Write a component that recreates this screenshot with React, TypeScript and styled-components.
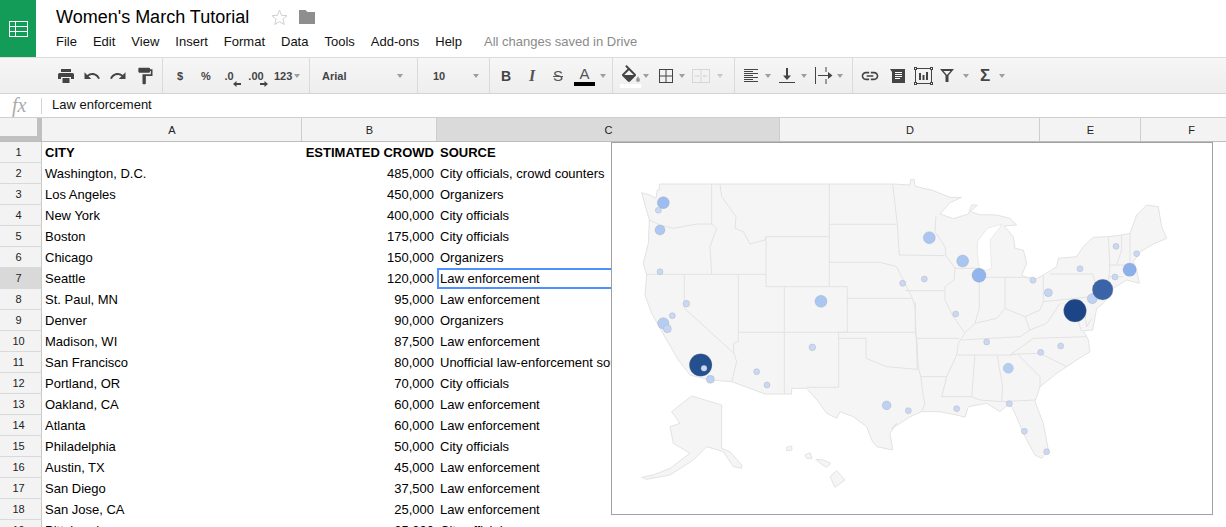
import React from 'react';
import styled, { createGlobalStyle } from 'styled-components';

const Global = createGlobalStyle`
  html, body { margin: 0; padding: 0; background: #fff; }
  body { font-family: "Liberation Sans", Arial, sans-serif; color: #000; }
`;

const Page = styled.div`
  position: relative;
  width: 1226px;
  height: 527px;
  overflow: hidden;
  background: #fff;
`;

/* ---------- header ---------- */
const Header = styled.header`
  display: flex;
  height: 57px;
  border-bottom: 1px solid #dcdcdc;
  box-sizing: content-box;
`;
const Logo = styled.div`
  width: 36px;
  height: 57px;
  background: #129c57;
  display: flex;
  align-items: center;
  justify-content: center;
`;
const TitleBlock = styled.div`
  margin-left: 20px;
  display: flex;
  flex-direction: column;
`;
const TitleRow = styled.div`
  height: 34px;
  display: flex;
  align-items: center;
  gap: 11px;
`;
const Title = styled.span`
  font-size: 18px;
  color: #000;
  margin-right: 11px;
`;
const Menu = styled.nav`
  display: flex;
  gap: 16px;
  height: 15px;
  line-height: 15px;
  font-size: 13px;
  color: #111;
`;
const Status = styled.span`
  margin-left: 6px;
  color: #8a8a8a;
`;

/* ---------- toolbar ---------- */
const Toolbar = styled.div`
  display: flex;
  height: 35px;
  background: linear-gradient(#f6f6f6, #eeeeee);
  border-bottom: 1px solid #d4d4d4;
`;
const ToolGroup = styled.div<{ $w?: number }>`
  display: flex;
  align-items: center;
  flex: ${p => (p.$w ? `0 0 ${p.$w}px` : '1')};
  box-sizing: border-box;
  height: 100%;
  ${p => (p.$w ? 'border-right: 1px solid #dadada;' : '')}
`;
const Tool = styled.div<{ $w: number; $ml?: number }>`
  flex: 0 0 ${p => p.$w}px;
  margin-left: ${p => p.$ml ?? 0}px;
  height: 100%;
  display: flex;
  align-items: center;
  justify-content: center;
  color: #444;
  position: relative;
`;
const BoldGlyph = styled.span<{ $size?: number }>`
  font-size: ${p => p.$size ?? 11}px;
  font-weight: bold;
  color: #444;
`;
const SerifI = styled.span`
  font-family: "Liberation Serif", serif;
  font-style: italic;
  font-weight: bold;
  font-size: 16px;
  color: #555;
`;
const Strike = styled.span`
  font-size: 15px;
  color: #555;
  text-decoration: line-through;
`;
const ColorA = styled.div`
  display: flex;
  flex-direction: column;
  align-items: center;
  font-size: 15px;
  line-height: 14px;
  color: #555;
  margin-top: 1px;
`;
const ColorBar = styled.span<{ $c: string }>`
  display: block;
  width: 21px;
  height: 4px;
  margin-top: 1px;
  background: ${p => p.$c};
`;
const FillStack = styled.div`
  display: flex;
  flex-direction: column;
  align-items: center;
  margin-top: 1px;
`;
const Caret = styled.div<{ $w: number; $ml?: number; $light?: boolean }>`
  flex: 0 0 ${p => p.$w}px;
  margin-left: ${p => p.$ml ?? 0}px;
  display: flex;
  justify-content: center;
  &::after {
    content: "";
    flex: none;
    width: 0;
    height: 0;
    margin-top: 1px;
    border-left: 3.5px solid transparent;
    border-right: 3.5px solid transparent;
    border-top: 4px solid ${p => (p.$light ? '#c8c8c8' : '#9e9e9e')};
  }
`;
const FontName = styled.div<{ $w: number; $ml: number }>`
  flex: 0 0 ${p => p.$w}px;
  margin-left: ${p => p.$ml}px;
  font-size: 11px;
  font-weight: bold;
  color: #444;
`;
const DecimalTool = styled.div`
  position: relative;
  font-size: 11px;
  font-weight: bold;
  color: #444;
`;
const DecimalArrow = styled.svg<{ $right: number }>`
  position: absolute;
  right: ${p => p.$right}px;
  bottom: -5px;
`;

/* ---------- formula bar ---------- */
const FormulaBar = styled.div`
  display: flex;
  align-items: center;
  height: 23px;
  border-bottom: 1px solid #cfcfcf;
  background: #fff;
`;
const Fx = styled.span`
  flex: 0 0 41px;
  box-sizing: border-box;
  padding-left: 12px;
  font-family: "Liberation Serif", serif;
  font-style: italic;
  font-size: 20px;
  color: #aaaaaa;
  line-height: 23px;
`;
const FormulaDivider = styled.span`
  width: 1px;
  height: 16px;
  background: #d4d4d4;
  margin-right: 10px;
`;
const FormulaText = styled.span`
  font-size: 13px;
  line-height: 15px;
  margin-top: -2px;
  color: #111;
`;

/* ---------- sheet ---------- */
const COLS = '42px 260px 135px 343px 260px 101px 101px';

const ColHead = styled.div`
  display: grid;
  grid-template-columns: ${COLS};
  height: 24px;
  border-bottom: 1px solid #bdbdbd;
  background: #f3f3f3;
  box-sizing: border-box;
`;
const Corner = styled.div`
  box-sizing: border-box;
  height: 23px;
  border-right: 5px solid #c0c0c0;
  border-bottom: 5px solid #c0c0c0;
  background: #f3f3f3;
`;
const ColLabel = styled.div<{ $sel?: boolean }>`
  display: flex;
  align-items: center;
  justify-content: center;
  padding-left: 1px;
  font-size: 11px;
  color: #222;
  box-sizing: border-box;
  border-right: 1px solid #cdcdcd;
  background: ${p => (p.$sel ? '#dadada' : '#f3f3f3')};
`;
const Row = styled.div`
  display: grid;
  grid-template-columns: ${COLS};
  height: 21px;
`;
const RowNum = styled.div<{ $sel?: boolean }>`
  box-sizing: border-box;
  display: flex;
  align-items: center;
  justify-content: center;
  padding-right: 4px;
  font-size: 11px;
  color: #222;
  background: ${p => (p.$sel ? '#d9d9d9' : '#f3f3f3')};
  border-right: 1px solid #c8c8c8;
  border-bottom: 1px solid #d9d9d9;
`;
const Cell = styled.div<{ $right?: boolean; $bold?: boolean; $sel?: boolean }>`
  box-sizing: border-box;
  font-size: 13px;
  line-height: 22px;
  white-space: nowrap;
  overflow: hidden;
  color: #000;
  text-align: ${p => (p.$right ? 'right' : 'left')};
  font-weight: ${p => (p.$bold ? 'bold' : 'normal')};
  padding: 0 3px;
  ${p => (p.$sel ? 'box-shadow: inset 0 0 0 2px #4d90fe;' : '')}
`;

/* ---------- chart ---------- */
const Chart = styled.div`
  position: absolute;
  left: 611px;
  top: 142px;
  width: 602px;
  height: 373px;
  box-sizing: border-box;
  border: 1px solid #a0a0a0;
  background: #fff;
`;
const MapSvg = styled.svg`
  display: block;
`;
const Land = styled.path`
  fill: #f5f5f5;
  stroke: #e2e2e2;
  stroke-width: 3;
  stroke-linejoin: round;
`;
const Border = styled.path`
  fill: none;
  stroke: #e2e2e2;
  stroke-width: 3;
  stroke-linejoin: round;
`;
const Lake = styled.path`
  fill: #fff;
  stroke: #e2e2e2;
  stroke-width: 2;
`;
const Bubble = styled.circle`
  stroke: rgba(140, 140, 140, 0.35);
  stroke-width: 2;
`;

type P = [number, number];
const d = (pts: P[], dx = 0, close = false) =>
  'M' + pts.map(([x, y]) => `${x + dx} ${y}`).join('L') + (close ? 'Z' : '');

const westA: P[] = [
  [95, 158], [120, 165], [138, 175], [142, 150], [148, 150], [148, 132], [848, 132],
];
const east: P[] = [
  [-22, 132], [30, 135], [32, 118], [42, 118], [45, 138], [70, 145], [95, 150], [120, 160], [150, 172], [185, 172],
  [150, 188], [120, 222], [160, 236], [205, 222], [215, 195], [232, 195], [212, 215], [238, 224], [290, 225], [330, 235], [350, 255],
  [312, 258], [340, 290], [345, 325], [370, 330], [380, 370], [365, 405], [398, 422], [432, 404], [470, 380], [475, 355],
  [530, 350], [550, 320], [580, 292], [625, 290], [665, 285], [690, 280], [710, 225], [740, 195], [775, 200], [785, 260],
  [800, 295], [760, 312], [722, 335], [700, 365], [710, 390], [718, 430], [680, 420], [640, 445], [610, 490], [590, 505],
  [578, 570], [550, 572], [565, 600], [570, 635], [530, 660], [500, 680], [470, 700], [420, 740], [405, 785], [430, 850],
  [445, 930], [425, 955], [405, 945], [375, 890], [345, 820], [330, 790], [300, 815], [260, 790], [205, 800], [195, 832],
  [170, 825], [120, 815], [65, 815], [30, 830], [0, 850], [-25, 865],
];
const westB: P[] = [
  [860, 850], [840, 880], [848, 930], [800, 920], [785, 900], [770, 860], [730, 830], [690, 815], [680, 835], [650, 820],
  [625, 785], [590, 745], [545, 745], [545, 762], [465, 762], [365, 725], [300, 720], [240, 705], [205, 660], [170, 600],
  [125, 520], [105, 465], [110, 405], [100, 370], [115, 310], [118, 240],
];
const outline = d([...westA, ...east.map(([x, y]) => [x + 870, y] as P), ...westB], 0, true);

const westBorders: P[][] = [
  [[118, 240], [150, 255], [190, 265], [260, 252], [305, 252]],
  [[305, 132], [305, 252]],
  [[330, 132], [335, 170], [378, 230], [375, 265], [400, 275], [420, 312], [465, 300], [468, 290]],
  [[305, 252], [320, 265], [300, 320], [305, 403]],
  [[110, 403], [468, 403]],
  [[223, 403], [223, 505], [372, 640]],
  [[385, 403], [385, 605], [370, 610], [372, 640], [380, 665], [365, 725]],
  [[468, 290], [658, 290], [658, 440], [468, 440], [468, 290]],
  [[523, 440], [523, 762]],
  [[385, 577], [712, 577]],
  [[658, 440], [712, 440], [712, 577]],
  [[686, 577], [686, 742], [590, 742]],
  [[658, 132], [658, 290]],
  [[658, 253], [860, 253]],
  [[658, 367], [810, 367], [860, 380], [880, 420], [905, 470], [915, 500], [918, 577], [922, 690]],
  [[712, 475], [905, 475]],
  [[848, 132], [862, 253], [868, 345], [1005, 347]],
  [[686, 595], [768, 595], [768, 655], [830, 680], [922, 688]],
  [[686, 577], [918, 577]],
];
const eastBorders: P[][] = [
  [[108, 228], [105, 275], [135, 320], [138, 347], [165, 385], [162, 420], [135, 440], [135, 480], [160, 530], [195, 580], [175, 610], [170, 645]],
  [[165, 385], [238, 385]],
  [[15, 452], [135, 452]],
  [[48, 595], [178, 595]],
  [[46, 485], [46, 577], [50, 595], [55, 680], [62, 710], [70, 770], [75, 790], [65, 815]],
  [[62, 710], [140, 710], [170, 645]],
  [[140, 710], [125, 770], [215, 770]],
  [[225, 645], [215, 770], [240, 780], [305, 785], [405, 780]],
  [[292, 648], [308, 740], [305, 785]],
  [[170, 645], [330, 645], [400, 595], [560, 590]],
  [[195, 578], [225, 550], [290, 535], [315, 505], [375, 530], [390, 570], [360, 590], [185, 600]],
  [[238, 412], [238, 505], [225, 550]],
  [[315, 412], [315, 505]],
  [[238, 412], [398, 412]],
  [[430, 405], [430, 485], [420, 510], [375, 530]],
  [[390, 570], [440, 550], [480, 490]],
  [[430, 485], [575, 470], [590, 440], [578, 402], [450, 402]],
  [[490, 490], [530, 530], [545, 575]],
  [[555, 520], [560, 560], [575, 535]],
  [[330, 645], [355, 642], [420, 640], [500, 680]],
  [[355, 645], [420, 710], [420, 740]],
  [[625, 290], [630, 375], [625, 430]],
  [[625, 375], [700, 375]],
  [[625, 410], [670, 410]],
  [[650, 375], [665, 330], [665, 285]],
  [[690, 280], [690, 365]],
];
const lake: P[] = [
  [232, 305], [262, 265], [305, 252], [300, 262], [270, 300], [272, 335], [275, 385], [258, 392], [238, 385], [232, 340],
];
const alaska: P[] = [
  [185, 815], [245, 768], [335, 795], [335, 925], [360, 935], [395, 975], [395, 985], [370, 980], [340, 935], [290, 920],
  [250, 960], [180, 1005], [110, 1018], [95, 1012], [130, 1005], [180, 985], [240, 940], [190, 910], [180, 860], [210, 850],
];
const hawaii: P[][] = [
  [[660, 1010], [680, 992], [705, 1020], [675, 1042]],
  [[585, 945], [600, 938], [606, 955], [590, 955]],
  [[618, 958], [640, 960], [662, 970], [650, 982], [630, 970]],
  [[530, 922], [545, 918], [546, 930], [530, 932]],
];

const S = '#c9d8f5';
const westBubbles: [number, number, number, string][] = [
  [160, 188, 18, '#9dbdf0'], [145, 211, 9, S], [150, 270, 15, '#aec8f2'], [150, 395, 9, S], [229, 491, 10, S],
  [187, 527, 9, S], [160, 550, 17, '#b6cdf3'], [172, 566, 12, '#c4d6f4'], [272, 675, 34, '#24508f'], [282, 685, 9, S],
  [301, 718, 12, '#bcd1f4'], [440, 695, 9, S], [471, 735, 9, S], [607, 622, 10, S], [633, 484, 18, '#aac6f3'],
  [830, 796, 13, '#bcd1f4'], [895, 812, 9, S], [878, 430, 9, S],
];
const eastBubbles: [number, number, number, string][] = [
  [88, 293, 18, '#abc6f2'], [188, 363, 18, '#a9c5f2'], [237, 406, 21, '#93b5ee'], [73, 417, 9, S], [167, 522, 9, S],
  [399, 421, 9, S], [445, 458, 12, '#c4d6f4'], [260, 606, 9, S], [422, 637, 9, S], [482, 618, 9, S],
  [325, 685, 15, '#b6cdf3'], [170, 806, 9, S], [328, 791, 9, S], [373, 874, 9, S], [440, 935, 9, S], [540, 386, 9, S],
  [648, 319, 9, S], [710, 341, 9, S], [645, 411, 9, S], [689, 389, 20, '#8bb0ec'], [577, 476, 15, '#bdd2f4'],
  [608, 449, 31, '#3b64a8'], [525, 512, 34, '#1c4587'],
];

const UsMap = () => (
  <MapSvg width={600} height={371} viewBox="612 143 600 371">
    <g transform="translate(610 140) scale(0.33333)">
      <Land d={outline} />
      <Land d={d(alaska, 0, true)} />
      {hawaii.map((h, i) => <Land key={i} d={d(h, 0, true)} />)}
      {westBorders.map((b, i) => <Border key={i} d={d(b)} />)}
      {eastBorders.map((b, i) => <Border key={i} d={d(b, 870)} />)}
      <Lake d={d(lake, 870, true)} />
      {westBubbles.map(([x, y, r, c], i) => <Bubble key={i} cx={x} cy={y} r={r} fill={c} />)}
      {eastBubbles.map(([x, y, r, c], i) => <Bubble key={i} cx={x + 870} cy={y} r={r} fill={c} />)}
    </g>
  </MapSvg>
);

/* ---------- icons ---------- */
const Mat = ({ size, path, fill = '#444' }: { size: number; path: string; fill?: string }) => (
  <svg width={size} height={size} viewBox="0 0 24 24"><path d={path} fill={fill} /></svg>
);
const SheetIcon = () => (
  <svg width={19} height={16} viewBox="0 0 19 16" fill="none" stroke="#fff" strokeWidth={1}>
    <rect x={0.5} y={0.5} width={18} height={15} />
    <path d="M0.5 5.5H18.5M0.5 10.5H18.5M6.5 0.5V15.5" />
  </svg>
);
const Star = () => (
  <svg width={17} height={17} viewBox="0 0 17 17" fill="#fff" stroke="#cfcfcf" strokeWidth={1}>
    <path d="M8.5 1.2l2.1 5.1 5.4.4-4.1 3.5 1.3 5.3-4.7-2.9-4.7 2.9 1.3-5.3L1 6.7l5.4-.4z" />
  </svg>
);
const Folder = () => (
  <svg width={16} height={14} viewBox="0 0 16 14"><path d="M0 0h6.5l2 2H16v12H0z" fill="#8e8e8e" /></svg>
);
const PrintIcon = () => (
  <svg width={16} height={14} viewBox="0 0 16 14" fill="#444">
    <path d="M3 0h10v3H3zM1.5 4h13A1.5 1.5 0 0116 5.5V10h-3V8H3v2H0V5.5A1.5 1.5 0 011.5 4zM4.5 9h7v5h-7z" />
  </svg>
);
const ArrowSmall = ({ dir }: { dir: 'l' | 'r' }) => (
  <DecimalArrow $right={dir === 'l' ? -7 : -4} width={8} height={6} viewBox="0 0 8 6" fill="#444">
    <path d={dir === 'l' ? 'M0 3L3.5 0v2H8v2H3.5v2z' : 'M8 3L4.5 0v2H0v2h4.5v2z'} />
  </DecimalArrow>
);
const BorderIcon = ({ c = '#444' }: { c?: string }) => (
  <svg width={14} height={14} viewBox="0 0 14 14" fill="none" stroke={c} strokeWidth={1}>
    <rect x={0.5} y={0.5} width={13} height={13} />
    <path d="M7 0.5V13.5M0.5 7H13.5" />
  </svg>
);
const MergeIcon = () => (
  <svg width={18} height={14} viewBox="0 0 18 14" fill="none" stroke="#d6d6d6" strokeWidth={1}>
    <rect x={0.5} y={0.5} width={17} height={13} />
    <path d="M9 0.5V13.5M2.5 7H6M15.5 7H12" />
    <path d="M7.5 7L5.5 5.5V8.5zM10.5 7L12.5 5.5V8.5z" fill="#d6d6d6" stroke="none" />
  </svg>
);
const AlignIcon = () => (
  <svg width={14} height={13} viewBox="0 0 14 13" stroke="#444" strokeWidth={1}>
    <path d="M0 .5h14M0 2.5h9M0 4.5h14M0 6.5h9M0 8.5h14M0 10.5h9M0 12.5h14" />
  </svg>
);
const VAlignIcon = () => (
  <svg width={16} height={15} viewBox="0 0 16 15" fill="#444">
    <path d="M7 0h2v7.5h3L8 12 4 7.5h3zM0 14h16v1H0z" />
  </svg>
);
const WrapIcon = () => (
  <svg width={18} height={17} viewBox="0 0 18 17" fill="#444">
    <path d="M0 0h1v17H0zM3 8h10V5l4.5 3.5L13 12V9H3zM10.5 0h1v5h-1zM10.5 12h1v5h-1z" />
  </svg>
);
const CommentIcon = () => (
  <svg width={15} height={14} viewBox="0 0 15 14">
    <path d="M0 0h15v14H2V3z" fill="#444" />
    <path d="M5 3.5h7M5 5.5h7M5 7.5h7M5 9.5h5" stroke="#fff" strokeWidth={1} />
  </svg>
);
const ChartIcon = () => (
  <svg width={19} height={18} viewBox="0 0 19 18" fill="#fff" stroke="#444">
    <rect x={1.5} y={1.5} width={16} height={15} fill="none" />
    <rect x={0.5} y={0.5} width={2} height={2} />
    <rect x={16.5} y={0.5} width={2} height={2} />
    <rect x={0.5} y={15.5} width={2} height={2} />
    <rect x={16.5} y={15.5} width={2} height={2} />
    <path d="M5 6h2v7H5zM8.5 8h2v5h-2zM12 5h2v8h-2z" fill="#444" stroke="none" />
  </svg>
);
const FilterIcon = () => (
  <svg width={14} height={13} viewBox="0 0 14 13"><path d="M0 0h14L8.5 6.5V13h-3V6.5zM3.5 2l3.5 4 3.5-4z" fill="#444" fillRule="evenodd" /></svg>
);

const UNDO = 'M12.5 8c-2.65 0-5.05.99-6.9 2.6L2 7v9h9l-3.62-3.62c1.39-1.16 3.16-1.88 5.12-1.88 3.54 0 6.55 2.31 7.6 5.5l2.37-.78C21.08 11.03 17.15 8 12.5 8z';
const REDO = 'M18.4 10.6C16.55 8.99 14.15 8 11.5 8c-4.65 0-8.58 3.03-9.96 7.22L3.9 16c1.05-3.19 4.05-5.5 7.6-5.5 1.95 0 3.73.72 5.12 1.88L13 16h9V7l-3.6 3.6z';
const PAINT = 'M18 4V3c0-.55-.45-1-1-1H5c-.55 0-1 .45-1 1v4c0 .55.45 1 1 1h12c.55 0 1-.45 1-1V6h1v4H9v11c0 .55.45 1 1 1h2c.55 0 1-.45 1-1v-9h8V4h-3z';
const FILL = 'M16.56 8.94L7.62 0 6.21 1.41l2.38 2.38-5.15 5.15c-.59.59-.59 1.54 0 2.12l5.5 5.5c.29.29.68.44 1.06.44s.77-.15 1.06-.44l5.5-5.5c.59-.58.59-1.53 0-2.12zM5.21 10L10 5.21 14.79 10H5.21z';
const DROP = 'M19 11.5s-2 2.17-2 3.5c0 1.1.9 2 2 2s2-.9 2-2c0-1.33-2-3.5-2-3.5z';
const LINK = 'M3.9 12c0-1.71 1.39-3.1 3.1-3.1h4V7H7c-2.76 0-5 2.24-5 5s2.24 5 5 5h4v-1.9H7c-1.71 0-3.1-1.39-3.1-3.1zM8 13h8v-2H8v2zm9-6h-4v1.9h4c1.71 0 3.1 1.39 3.1 3.1s-1.39 3.1-3.1 3.1h-4V17h4c2.76 0 5-2.24 5-5s-2.24-5-5-5z';

const FillIcon = () => (
  <svg width={22} height={18} viewBox="0 0 22 18">
    <path d={FILL} fill="#444" />
    <path d="M5 10h10l-5 5z" fill="#444" />
    <path d={DROP} fill="#999" />
  </svg>
);

/* ---------- data ---------- */
const rows: [string, string, string][] = [
  ['CITY', 'ESTIMATED CROWD', 'SOURCE'],
  ['Washington, D.C.', '485,000', 'City officials, crowd counters'],
  ['Los Angeles', '450,000', 'Organizers'],
  ['New York', '400,000', 'City officials'],
  ['Boston', '175,000', 'City officials'],
  ['Chicago', '150,000', 'Organizers'],
  ['Seattle', '120,000', 'Law enforcement'],
  ['St. Paul, MN', '95,000', 'Law enforcement'],
  ['Denver', '90,000', 'Organizers'],
  ['Madison, WI', '87,500', 'Law enforcement'],
  ['San Francisco', '80,000', 'Unofficial law-enforcement sources'],
  ['Portland, OR', '70,000', 'City officials'],
  ['Oakland, CA', '60,000', 'Law enforcement'],
  ['Atlanta', '60,000', 'Law enforcement'],
  ['Philadelphia', '50,000', 'City officials'],
  ['Austin, TX', '45,000', 'Law enforcement'],
  ['San Diego', '37,500', 'Law enforcement'],
  ['San Jose, CA', '25,000', 'Law enforcement'],
  ['Pittsburgh', '25,000', 'City officials'],
];
const menu = ['File', 'Edit', 'View', 'Insert', 'Format', 'Data', 'Tools', 'Add-ons', 'Help'];
const cols = ['A', 'B', 'C', 'D', 'E', 'F'];

export default function App() {
  return (
    <Page>
      <Global />
      <Header>
        <Logo><SheetIcon /></Logo>
        <TitleBlock>
          <TitleRow>
            <Title>Women's March Tutorial</Title>
            <Star />
            <Folder />
          </TitleRow>
          <Menu>
            {menu.map(m => <span key={m}>{m}</span>)}
            <Status>All changes saved in Drive</Status>
          </Menu>
        </TitleBlock>
      </Header>

      <Toolbar>
        <ToolGroup $w={163}>
          <Tool $w={26} $ml={53}><PrintIcon /></Tool>
          <Tool $w={26}><Mat size={18} path={UNDO} /></Tool>
          <Tool $w={26}><Mat size={18} path={REDO} /></Tool>
          <Tool $w={28}><Mat size={20} path={PAINT} /></Tool>
        </ToolGroup>
        <ToolGroup $w={147}>
          <Tool $w={26} $ml={4}><BoldGlyph>$</BoldGlyph></Tool>
          <Tool $w={26}><BoldGlyph>%</BoldGlyph></Tool>
          <Tool $w={20}><DecimalTool>.0<ArrowSmall dir="l" /></DecimalTool></Tool>
          <Tool $w={34}><DecimalTool>.00<ArrowSmall dir="r" /></DecimalTool></Tool>
          <Tool $w={18} $ml={1}><BoldGlyph>123</BoldGlyph></Tool>
          <Caret $w={10} />
        </ToolGroup>
        <ToolGroup $w={108}>
          <FontName $w={74} $ml={12}>Arial</FontName>
          <Caret $w={8} />
        </ToolGroup>
        <ToolGroup $w={72}>
          <FontName $w={39} $ml={15}>10</FontName>
          <Caret $w={8} />
        </ToolGroup>
        <ToolGroup $w={123}>
          <Tool $w={32}><BoldGlyph $size={14}>B</BoldGlyph></Tool>
          <Tool $w={20}><SerifI>I</SerifI></Tool>
          <Tool $w={32}><Strike>S</Strike></Tool>
          <Tool $w={18}><ColorA>A<ColorBar $c="#000" /></ColorA></Tool>
          <Caret $w={16} />
        </ToolGroup>
        <ToolGroup $w={122}>
          <Tool $w={22} $ml={6}><FillStack><FillIcon /><ColorBar $c="#fff" /></FillStack></Tool>
          <Caret $w={10} />
          <Tool $w={24} $ml={3}><BorderIcon /></Tool>
          <Caret $w={8} />
          <Tool $w={30}><MergeIcon /></Tool>
          <Caret $w={8} $light />
        </ToolGroup>
        <ToolGroup $w={118}>
          <Tool $w={20} $ml={6}><AlignIcon /></Tool>
          <Caret $w={14} />
          <Tool $w={24}><VAlignIcon /></Tool>
          <Caret $w={10} />
          <Tool $w={24} $ml={3}><WrapIcon /></Tool>
          <Caret $w={8} />
        </ToolGroup>
        <ToolGroup>
          <Tool $w={28} $ml={3}><Mat size={20} path={LINK} /></Tool>
          <Tool $w={26}><CommentIcon /></Tool>
          <Tool $w={26}><ChartIcon /></Tool>
          <Tool $w={22}><FilterIcon /></Tool>
          <Caret $w={16} />
          <Tool $w={22}><BoldGlyph $size={17}>Σ</BoldGlyph></Tool>
          <Caret $w={12} />
        </ToolGroup>
      </Toolbar>

      <FormulaBar>
        <Fx>fx</Fx>
        <FormulaDivider />
        <FormulaText>Law enforcement</FormulaText>
      </FormulaBar>

      <ColHead>
        <Corner />
        {cols.map(c => <ColLabel key={c} $sel={c === 'C'}>{c}</ColLabel>)}
      </ColHead>

      {rows.map((r, i) => (
        <Row key={i}>
          <RowNum $sel={i === 6}>{i + 1}</RowNum>
          <Cell $bold={i === 0}>{r[0]}</Cell>
          <Cell $right $bold={i === 0}>{r[1]}</Cell>
          <Cell $bold={i === 0} $sel={i === 6}>{r[2]}</Cell>
        </Row>
      ))}

      <Chart><UsMap /></Chart>
    </Page>
  );
}
